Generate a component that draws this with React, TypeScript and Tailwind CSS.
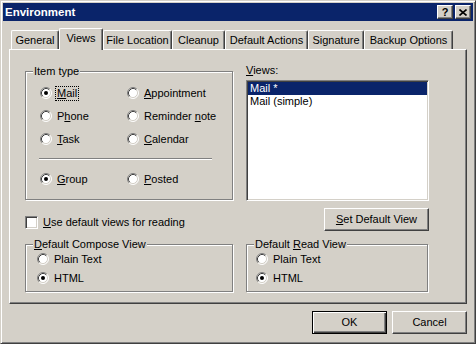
import React from "react"

type RadioProps = { checked?: boolean; children: React.ReactNode; focus?: boolean }

function RadioDot({ checked = false }: { checked?: boolean }) {
  return (
    <svg width="12" height="12" viewBox="0 0 12 12" className="shrink-0">
      <circle cx="6" cy="6" r="5" fill="#fff" />
      <path d="M2.11 9.89A5.5 5.5 0 0 1 9.89 2.11" fill="none" stroke="#808080" />
      <path d="M9.89 2.11A5.5 5.5 0 0 1 2.11 9.89" fill="none" stroke="#fff" />
      <path d="M2.82 9.18A4.5 4.5 0 0 1 9.18 2.82" fill="none" stroke="#404040" />
      <path d="M9.18 2.82A4.5 4.5 0 0 1 2.82 9.18" fill="none" stroke="#d4d0c8" />
      {checked && <circle cx="6" cy="6" r="2" fill="#000" />}
    </svg>
  )
}

function Radio({ checked, children, focus }: RadioProps) {
  return (
    <div className="flex h-[16px] items-center gap-[4px]">
      <RadioDot checked={checked} />
      <span className={focus ? "px-[1px] outline-1 outline-dotted outline-black" : "px-[1px]"}>
        {children}
      </span>
    </div>
  )
}

function GroupBox({
  title,
  className,
  children
}: {
  title: React.ReactNode
  className: string
  children: React.ReactNode
}) {
  return (
    <div
      className={
        "relative border border-[#808080] shadow-[inset_1px_1px_0_#fff,1px_1px_0_#fff] " +
        className
      }
    >
      <span className="absolute -top-[7px] left-[7px] bg-[#d4d0c8] px-[1px] leading-[13px]">
        {title}
      </span>
      {children}
    </div>
  )
}

function Button({
  children,
  isDefault,
  className
}: {
  children: React.ReactNode
  isDefault?: boolean
  className: string
}) {
  return (
    <div
      className={
        "flex h-[23px] items-center justify-center " +
        (isDefault
          ? "border border-black shadow-[inset_1px_1px_0_#fff,inset_-1px_-1px_0_#404040,inset_-2px_-2px_0_#808080] "
          : "border border-t-white border-l-white border-r-[#404040] border-b-[#404040] shadow-[inset_-1px_-1px_0_#808080] ") +
        className
      }
    >
      {children}
    </div>
  )
}

function CaptionButton({ children }: { children: React.ReactNode }) {
  return (
    <div className="flex h-[14px] w-[16px] items-center justify-center border border-t-white border-l-white border-r-[#404040] border-b-[#404040] bg-[#d4d0c8] shadow-[inset_-1px_-1px_0_#808080]">
      {children}
    </div>
  )
}

const tabs = [
  { label: "General", w: "w-[48px]" },
  { label: "Views", w: "w-[44px]", active: true },
  { label: "File Location", w: "w-[69px]" },
  { label: "Cleanup", w: "w-[53px]" },
  { label: "Default Actions", w: "w-[83px]" },
  { label: "Signature", w: "w-[56px]" },
  { label: "Backup Options", w: "w-[89px]" }
]

export default function App() {
  return (
    <div className="h-[344px] w-[476px] overflow-hidden bg-[#d4d0c8] font-['Liberation_Sans',Arial,sans-serif] text-[11px] leading-[13px] text-black">
      <div className="flex h-full flex-col border border-t-[#d4d0c8] border-l-[#d4d0c8] border-r-[#404040] border-b-[#404040] p-[2px] shadow-[inset_1px_1px_0_#fff,inset_-1px_-1px_0_#808080]">
        {/* title bar */}
        <div className="flex h-[18px] shrink-0 items-center justify-between bg-[#0a246a] pl-[2px] pr-[2px]">
          <span className="text-[11.5px] font-bold text-white">Environment</span>
          <div className="flex gap-[2px]">
            <CaptionButton>
              <span className="text-[11px] font-bold leading-none">?</span>
            </CaptionButton>
            <CaptionButton>
              <svg width="8" height="7" viewBox="0 0 8 7">
                <path d="M0.5 0.5L7.5 6.5M7.5 0.5L0.5 6.5" stroke="#000" strokeWidth="1.6" />
              </svg>
            </CaptionButton>
          </div>
        </div>

        <div className="flex flex-col px-[6px]">
          {/* tabs */}
          <div className="mt-[7px] flex h-[21px] items-end pl-[2px]">
            {tabs.map((t) =>
              t.active ? (
                <div
                  key={t.label}
                  className={
                    "relative z-10 -mb-[1px] flex h-[22px] items-center justify-center rounded-t-[2px] border-t border-l border-r border-t-white border-l-white border-r-[#404040] bg-[#d4d0c8] pb-[3px] shadow-[inset_-1px_0_0_#808080] " +
                    t.w
                  }
                >
                  {t.label}
                </div>
              ) : (
                <div
                  key={t.label}
                  className={
                    "flex h-[19px] items-center justify-center rounded-t-[2px] border-t border-l border-r border-t-white border-l-white border-r-[#404040] pt-[1px] shadow-[inset_-1px_0_0_#808080] " +
                    t.w
                  }
                >
                  {t.label}
                </div>
              )
            )}
          </div>

          {/* tab page */}
          <div className="flex h-[255px] flex-col border border-t-white border-l-white border-r-[#404040] border-b-[#404040] pl-[15px] shadow-[inset_-1px_-1px_0_#808080]">
            <div className="flex items-start gap-[13px]">
              <GroupBox title="Item type" className="mt-[21px] h-[129px] w-[208px]">
                <div className="grid grid-cols-[87px_1fr] gap-y-[7px] pl-[14px] pt-[13px]">
                  <Radio checked focus>
                    <u>M</u>ail
                  </Radio>
                  <Radio>
                    <u>A</u>ppointment
                  </Radio>
                  <Radio>
                    P<u>h</u>one
                  </Radio>
                  <Radio>
                    Reminder <u>n</u>ote
                  </Radio>
                  <Radio>
                    <u>T</u>ask
                  </Radio>
                  <Radio>
                    <u>C</u>alendar
                  </Radio>
                </div>
                <div className="ml-[13px] mt-[11px] h-[2px] w-[173px] border-t border-b border-t-[#808080] border-b-white" />
                <div className="mt-[11px] grid grid-cols-[87px_1fr] pl-[14px]">
                  <Radio checked>
                    <u>G</u>roup
                  </Radio>
                  <Radio>
                    <u>P</u>osted
                  </Radio>
                </div>
              </GroupBox>

              <div className="mt-[14px] flex w-[183px] flex-col">
                <span>
                  <u>V</u>iews:
                </span>
                <div className="mt-[3px] h-[121px] border border-t-[#808080] border-l-[#808080] border-r-white border-b-white bg-white p-[1px] shadow-[inset_1px_1px_0_#404040,inset_-1px_-1px_0_#d4d0c8]">
                  <div className="flex h-[13px] items-center bg-[#0a246a] px-[2px] text-white">Mail *</div>
                  <div className="flex h-[13px] items-center px-[2px]">Mail (simple)</div>
                </div>
              </div>
            </div>

            <div className="mt-[7px] flex items-start gap-[13px]">
              <div className="mt-[8px] flex w-[208px] items-center gap-[5px]">
                <div className="h-[13px] w-[13px] border border-t-[#808080] border-l-[#808080] border-r-white border-b-white bg-white shadow-[inset_1px_1px_0_#404040,inset_-1px_-1px_0_#d4d0c8]" />
                <span>
                  <u>U</u>se default views for reading
                </span>
              </div>
              <div className="flex w-[183px] justify-end">
                <Button className="w-[105px]">
                  <span>
                    <u>S</u>et Default View
                  </span>
                </Button>
              </div>
            </div>

            <div className="mt-[13px] flex items-start gap-[13px]">
              <GroupBox
                title={
                  <>
                    <u>D</u>efault Compose View
                  </>
                }
                className="h-[48px] w-[208px]"
              >
                <div className="flex flex-col gap-[3px] pl-[11px] pt-[6px]">
                  <Radio>Plain Text</Radio>
                  <Radio checked>HTML</Radio>
                </div>
              </GroupBox>
              <GroupBox
                title={
                  <>
                    Default <u>R</u>ead View
                  </>
                }
                className="h-[48px] w-[182px]"
              >
                <div className="flex flex-col gap-[3px] pl-[9px] pt-[6px]">
                  <Radio>Plain Text</Radio>
                  <Radio checked>HTML</Radio>
                </div>
              </GroupBox>
            </div>
          </div>

          {/* dialog buttons */}
          <div className="mt-[7px] flex justify-end gap-[5px]">
            <Button isDefault className="w-[75px]">
              OK
            </Button>
            <Button className="w-[75px]">Cancel</Button>
          </div>
        </div>
      </div>
    </div>
  )
}
